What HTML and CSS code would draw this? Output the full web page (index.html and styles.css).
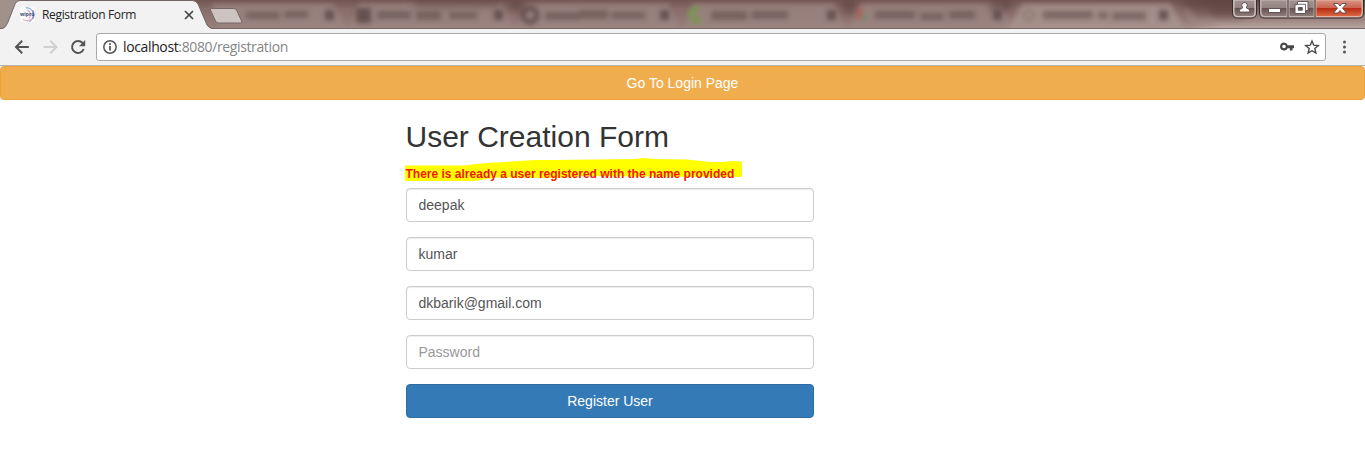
FILE: index.html
```html
<!DOCTYPE html>
<html lang="en">
<head>
<meta charset="utf-8">
<title>Registration Form</title>
<link rel="stylesheet" href="styles.css">
</head>
<body>
<header class="browser">
  <div class="titlebar">
    <svg class="glass" width="1365" height="29" viewBox="0 0 1365 29" aria-hidden="true">
      <defs>
        <linearGradient id="base" x1="0" y1="0" x2="0" y2="1">
          <stop offset="0" stop-color="#725452"/><stop offset=".3" stop-color="#886c69"/><stop offset="1" stop-color="#98807c"/>
        </linearGradient>
        <linearGradient id="right" x1="0" y1="0" x2="0" y2="1">
          <stop offset="0" stop-color="#604744"/><stop offset=".65" stop-color="#9a817d"/><stop offset="1" stop-color="#bba8a3"/>
        </linearGradient>
        <linearGradient id="fade" x1="0" x2="1"><stop offset="0" stop-color="#fff" stop-opacity="0"/><stop offset=".25" stop-color="#fff"/></linearGradient>
        <mask id="fadeMask"><rect x="1170" width="195" height="29" fill="url(#fade)"/></mask>
        <filter id="soft" x="-10%" y="-60%" width="120%" height="220%"><feGaussianBlur stdDeviation="2.600"/></filter>
        <filter id="wide" x="-10%" y="-60%" width="120%" height="220%"><feGaussianBlur stdDeviation="4"/></filter>
      </defs>
      <rect width="1365" height="29" fill="url(#base)"/>
      <rect width="30" height="29" fill="#a09288"/>
      <rect x="1170" width="195" height="29" fill="url(#right)" mask="url(#fadeMask)"/>
      <g filter="url(#soft)" fill="#9b8581" opacity=".8">
        <path d="M222 34l-10-30h121l17 30zM347 34l12-30h143l14 30zM515 34l12-30h141l14 30zM681 34l12-30h141l14 30zM848 34l12-30h141l14 30z"/>
        <path fill="#a99590" d="M1005 34l17-30h148l18 30z"/>
        <path fill="#a38e89" d="M1184 8h24l8 16h-24z"/>
      </g>
      <g filter="url(#wide)" fill="#5c3f3e" opacity=".65">
        <path d="M415 0h85v6h-85zM509 0h14v11h-14zM842 0h14v14h-14zM990 0h22v10h-22zM1178 0h67v17h-50z"/>
      </g>
      <g filter="url(#soft)" fill="#54403f" opacity=".75">
        <path d="M356 8h15v15h-15zM325 10h9v10h-9zM494 10h9v10h-9zM660 10h9v10h-9zM827 10h9v10h-9zM993 10h9v10h-9zM1159 10h9v10h-9z"/>
        <circle cx="530" cy="15" r="7" fill="none" stroke="#54403f" stroke-width="5"/>
        <path d="M691 18q-1-8 8-10M692 20q4 2 9-1" fill="none" stroke="#68a13b" stroke-width="5"/>
        <path fill="#b5524d" d="M857 8h5v11h-5z"/><path fill="#5d8b63" d="M862 15h5v5h-5z"/>
        <circle cx="1029" cy="15" r="5" fill="none" stroke="#857567" stroke-width="3"/>
        <path opacity=".65" d="M246 12h34v7h-34zM284 11h24v7h-24zM377 11h34v8h-34zM416 11h25v9h-25zM449 12h28v7h-28zM545 12h34v8h-34zM579 10h29v9h-29zM611 12h34v7h-34zM711 11h36v9h-36zM751 11h37v8h-37zM875 11h40v8h-40zM920 13h24v7h-24zM949 11h26v8h-26zM1043 11h50v8h-50zM1098 12h10v7h-10zM1112 12h34v8h-34z"/>
      </g>
      <path d="M0 28.5h1365" stroke="#796765"/>
      <path d="M211.500 8.500h22q2.500 0 3.500 2.500l5 11q0 1-2 1h-21.500q-2 0-3-2l-5-11q-.5-1.500 1-1.500z" fill="#cdc4c1" stroke="#756765"/>
      <path d="M0 29C5 29 6 26 8 22L15 4Q16.500.5 20 .5H192Q196 .5 198 4L207 25Q209 29 214 29z" fill="#f2f2f2"/>
      <path d="M0 28.500C5 28.500 6 26 8 22L15 4Q16.500.5 20 .5H192Q196 .5 198 4L207 25Q209 28.500 214 28.500" fill="none" stroke="#726765"/>
    </svg>
    <div class="tab">
      <svg width="18" height="18" viewBox="0 0 18 18">
        <rect x="1" y="1" width="15" height="15" fill="#fafafa"/>
        <path d="M7 1.800a7 7 0 0 1 3 13.500" fill="none" stroke="#8bb4da" stroke-width="1.400"/>
        <path d="M8 4a5 5 0 0 1 2 8.500M4 13.500q5 3 9.500-1" fill="none" stroke="#e5b3c8" stroke-width="1.300"/>
        <path d="M13.500 4.500a7 7 0 0 1 0 8" fill="none" stroke="#8e8bc8" stroke-width="1.500"/>
        <text x="1" y="10" class="logo-text">wipro</text>
      </svg>
      <span class="tab-title">Registration Form</span>
      <svg class="tab-close" width="10" height="10" viewBox="0 0 10 10"><path d="M1 1l8 8m0-8l-8 8" stroke="#454545" stroke-width="1.700"/></svg>
    </div>
    <svg class="window-controls" width="134" height="22" viewBox="0 0 134 22">
      <defs>
        <linearGradient id="ctl" x1="0" y1="0" x2="0" y2="1"><stop offset="0" stop-color="#a39592"/><stop offset=".46" stop-color="#93827f"/><stop offset=".5" stop-color="#65504f"/><stop offset="1" stop-color="#91807d"/></linearGradient>
        <linearGradient id="red" x1="0" y1="0" x2="0" y2="1"><stop offset="0" stop-color="#d89788"/><stop offset=".46" stop-color="#cb6450"/><stop offset=".5" stop-color="#b72b13"/><stop offset="1" stop-color="#dd6a42"/></linearGradient>
      </defs>
      <path d="M.5 0v13q0 5 5 5h14q5 0 5-5V0M27.500 0v13q0 5 5 5h94q5 0 5-5V0" fill="#b7a5a1" stroke="#382b2b"/>
      <path d="M2 0v12q0 4.500 4 4.500h13q4 0 4-4.500V0z" fill="url(#ctl)" stroke="#d5cac7"/>
      <path d="M29 0v12q0 4.500 4 4.500h22V0z" fill="url(#ctl)" stroke="#c5b6b3"/>
      <path d="M57 0v16.500h25V0z" fill="url(#ctl)" stroke="#c5b6b3"/>
      <path d="M84 0v16.500h42q4 0 4-4.500V0z" fill="url(#red)" stroke="#e5b3a4"/>
      <path d="M56 0v17M83 0v17" stroke="#4c3938"/>
      <g fill="#fff" stroke="#58494b" stroke-width=".9">
        <path d="M12.500 2.500a2.700 2.700 0 0 1 2 4.600v1q3.500.6 3.500 3.900h-11q0-3.300 3.500-3.900v-1a2.700 2.700 0 0 1 2-4.600z"/>
        <path d="M36.500 8.500h12v4h-12z"/>
        <path fill-rule="evenodd" d="M65.500 1.500h10.500v9h-2.500v3h-10.500v-9h2.500zM66.300 7.500v2.700h4v-2.700z"/>
        <path d="M101.500 3.500h4.500l2 2.500 2-2.500h4.500l-4 4.700 4 4.800h-4.500l-2-2.500-2 2.500h-4.500l4-4.800z"/>
      </g>
      <path d="M66 4.300h7.500v6" fill="none" stroke="#67585b" stroke-width=".9"/>
    </svg>
  </div>
  <nav class="toolbar">
    <svg class="nav-icons" width="80" height="20" viewBox="0 0 80 20" fill="none" stroke-width="2">
      <path d="M22.800 10H10.500M16.200 3.800L10 10l6.200 6.200" stroke="#555"/>
      <path d="M37.500 10h12.500M44.300 3.800l6.200 6.200-6.200 6.200" stroke="#d0d0d0"/>
      <path d="M77.700 12a6 6 0 1 1-1.300-6.200l1.600 1.600" stroke="#555"/><path d="M79.200 3v6.200h-6.200z" fill="#555"/>
    </svg>
    <div class="address">
      <svg width="16" height="16" viewBox="0 0 16 16"><circle cx="8" cy="8" r="6.200" fill="none" stroke="#555" stroke-width="1.500"/><path d="M7.100 7h1.800v4.500H7.100zM7.100 4.300h1.800v1.600H7.100z" fill="#555"/></svg>
      <span class="url"><span class="host">localhost</span>:8080/registration</span>
      <svg class="address-actions" width="42" height="18" viewBox="0 0 42 18">
        <path fill="#484848" fill-rule="evenodd" d="M6 4.500a4 4 0 0 1 3.700 2.700H16v3h-1.500v2.400h-2.700v-2.400H9.700A4 4 0 1 1 6 4.500zM6 6.700a1.800 1.800 0 1 0 0 3.600 1.800 1.800 0 0 0 0-3.600z"/>
        <path d="M34 3l1.750 4.200 4.550.38-3.450 3 1.050 4.500L34 12.700l-3.900 2.380 1.050-4.500-3.450-3 4.550-.38z" fill="none" stroke="#484848" stroke-width="1.400"/>
      </svg>
    </div>
    <svg class="menu-icon" width="4" height="16" viewBox="0 0 4 16" fill="#555"><circle cx="1.500" cy="3" r="1.500"/><circle cx="1.500" cy="8" r="1.500"/><circle cx="1.500" cy="13" r="1.500"/></svg>
  </nav>
</header>
<main>
  <button class="btn btn-warning" type="button">Go To Login Page</button>
  <form class="registration">
    <h2 class="form-title">User Creation Form</h2>
    <p class="error">
      <svg class="marker" width="338" height="26" viewBox="0 0 338 26"><path d="M0 8.500H60Q78 5.500 100 5L130 3H150L230 2 238 1 250 2 282 2.500 305 5 318 5 326 4 337 4.500V20H300L180 19 150 21 90 20.500 70 24H0z" fill="#ff0"/></svg>
      <span class="error-text">There is already a user registered with the name provided</span>
    </p>
    <input class="field" type="text" value="deepak">
    <input class="field" type="text" value="kumar">
    <input class="field" type="text" value="dkbarik@gmail.com">
    <input class="field" type="password" placeholder="Password">
    <button class="btn btn-primary" type="button">Register User</button>
  </form>
</main>
</body>
</html>
```
FILE: styles.css
```css
* { box-sizing: border-box; }
body {
  margin: 0;
  height: 460px;
  overflow: hidden;
  background: #fff;
  font: 14px/20px "Liberation Sans", Arial, sans-serif;
}
svg { display: block; flex: none; }
.titlebar {
  position: relative;
  display: flex;
  justify-content: space-between;
  height: 29px;
}
.glass { position: absolute; top: 0; left: 0; }
.tab {
  position: relative;
  display: flex;
  align-items: center;
  width: 195px;
  height: 29px;
  padding-left: 19px;
}
.logo-text { font: bold 5px "Open Sans", sans-serif; fill: #3b5377; }
.tab-title {
  margin-left: 5px;
  color: #222;
  font: 12px/16px "Open Sans", sans-serif;
  letter-spacing: -.33px;
  white-space: nowrap;
}
.tab-close { margin-left: auto; margin-right: 1px; }
.window-controls { position: relative; margin-right: -1px; }
.toolbar {
  display: flex;
  align-items: center;
  height: 37px;
  padding: 0 18px 1px 6px;
  background: #f2f2f2;
  border-bottom: 1px solid #b7b3ae;
}
.nav-icons { margin-right: 10px; }
.address {
  display: flex;
  flex: 1;
  align-items: center;
  height: 28px;
  padding: 0 5px;
  border: 1px solid #a9a9a9;
  border-radius: 3px;
  background: #fff;
}
.url {
  margin-left: 5px;
  color: #858585;
  font: 14px/20px "Open Sans", sans-serif;
  letter-spacing: -.37px;
}
.host { color: #222; }
.address-actions { margin-left: auto; }
.menu-icon { margin-left: 17px; }
.btn {
  display: block;
  width: 100%;
  height: 34px;
  padding: 6px 12px;
  border: 1px solid;
  border-radius: 4px;
  color: #fff;
  font: 14px/20px "Liberation Sans", Arial, sans-serif;
}
.btn-warning { background: #f0ad4e; border-color: #eea236; }
.btn-primary { background: #337ab7; border-color: #2e6da4; }
.registration { width: 408px; margin: 20px 0 0 406px; }
.form-title {
  margin: 0 0 10px -.5px;
  color: #333;
  font-size: 30px;
  font-weight: 500;
  line-height: 33px;
}
.error {
  position: relative;
  height: 25px;
  margin: 0;
  color: #f01800;
  font-size: 12px;
  font-weight: bold;
  line-height: 22px;
}
.marker { position: absolute; top: -6px; left: -1px; }
.error-text { position: relative; margin-left: -.5px; white-space: nowrap; }
.field {
  display: block;
  width: 100%;
  height: 34px;
  margin-bottom: 15px;
  padding: 6px 11.5px;
  border: 1px solid #ccc;
  border-radius: 4px;
  box-shadow: inset 0 1px 1px rgba(0, 0, 0, .075);
  color: #555;
  font: 14px/20px "Liberation Sans", Arial, sans-serif;
}
.field::placeholder { color: #999; opacity: 1; }
```
